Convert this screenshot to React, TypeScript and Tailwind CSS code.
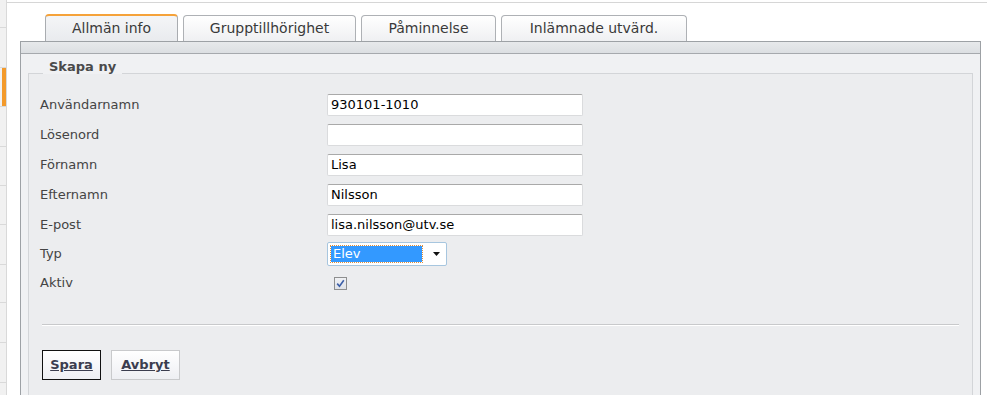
import React from "react";

const font = { fontFamily: '"DejaVu Sans", Verdana, sans-serif' };

function Tab({ label, active, width }: { label: string; active?: boolean; width: string }) {
  return (
    <div
      className={
        "flex items-center justify-center rounded-t-[4px] border border-b-0 text-[14px] text-[#3a3a3a] " +
        width +
        (active
          ? " h-[27px] border-[#a9acb0] border-t-2 border-t-[#f5a23a] bg-gradient-to-b from-[#f4f5f7] to-[#e9ebee]"
          : " h-[26px] border-[#aeb1b5] bg-gradient-to-b from-[#ffffff] to-[#eff0f2]")
      }
    >
      {label}
    </div>
  );
}

function Row({ label, children, h }: { label: string; children?: React.ReactNode; h: string }) {
  return (
    <div className={"flex items-center " + h}>
      <div className="w-[287px] text-[13px] text-[#444]">{label}</div>
      {children}
    </div>
  );
}

function TextInput({ value }: { value: string }) {
  return (
    <div className="flex h-[22px] w-[256px] items-center rounded-[2px] border border-[#dadbdd] border-t-[#a9a9a9] bg-white pl-[3px] text-[13px] text-black">
      {value}
    </div>
  );
}

export default function App() {
  const stripItems = [28, 40, 39, 40, 39, 39, 40, 38, 40, 40, 40];
  return (
    <div className="flex h-[395px] w-[987px] overflow-hidden bg-white" style={font}>
      <div className="flex w-[7px] flex-col border-r border-[#d9d9d9] bg-[#f1f1f1]">
        {stripItems.map((h, i) => (
          <div
            key={i}
            className="box-border shrink-0 border-b border-[#d9d9d9]"
            style={{ height: h }}
          >
            {i === 2 && <div className="ml-[2px] h-full bg-[#f39a2b]" />}
          </div>
        ))}
      </div>
      <div className="flex flex-1 flex-col">
        <div className="mt-[2px] border-t border-[#d6d6d6]" />
        <div className="ml-[13px] flex w-[961px] flex-col">
          <div className="flex items-end gap-[5px] pl-[25px] pt-[11px]">
            <Tab label="Allmän info" active width="w-[133px]" />
            <Tab label="Grupptillhörighet" width="w-[173px]" />
            <Tab label="Påminnelse" width="w-[135px]" />
            <Tab label="Inlämnade utvärd." width="w-[186px]" />
          </div>
          <div className="flex h-[360px] flex-col border border-b-0 border-[#9da1a5] bg-[#f0f1f3]">
            <div className="h-[12px] border-b border-[#a6a9ad] bg-gradient-to-b from-[#e7e9eb] to-[#dcdfe2]" />
            <div className="relative mx-[7px] mt-[19px] flex-1 border border-b-0 border-[#d3d5d8] bg-[#ecedef]">
              <span className="absolute left-[14px] top-[-1px] h-[1px] w-[79px] bg-[#f0f1f3]" />
              <span className="absolute left-[14px] top-[-15px] px-[6px] text-[13px] font-bold leading-[16px] text-[#4a4a4a]">
                Skapa ny
              </span>
              <div className="flex flex-col pl-[11px] pt-[16px]">
                <Row label="Användarnamn" h="h-[30px]">
                  <TextInput value="930101-1010" />
                </Row>
                <Row label="Lösenord" h="h-[30px]">
                  <TextInput value="" />
                </Row>
                <Row label="Förnamn" h="h-[30px]">
                  <TextInput value="Lisa" />
                </Row>
                <Row label="Efternamn" h="h-[30px]">
                  <TextInput value="Nilsson" />
                </Row>
                <Row label="E-post" h="h-[30px]">
                  <TextInput value="lisa.nilsson@utv.se" />
                </Row>
                <Row label="Typ" h="h-[28px]">
                  <div className="flex h-[24px] w-[120px] items-center rounded-[2px] border border-[#a7c6df] bg-white pl-[3px]">
                    <div className="flex h-[16px] w-[91px] items-center bg-[#3399ff] pl-[2px] text-[13px] text-white outline outline-1 outline-dotted outline-[#e0903a]">
                      Elev
                    </div>
                    <svg className="ml-[11px]" width="7" height="4" viewBox="0 0 7 4">
                      <path d="M0 0H7L3.5 4Z" fill="#111" />
                    </svg>
                  </div>
                </Row>
                <Row label="Aktiv" h="h-[30px]">
                  <div className="ml-[7px] flex h-[13px] w-[13px] items-center justify-center border border-[#8e8f8f] bg-gradient-to-b from-[#f0f1f4] to-[#dfe2e8]">
                    <svg width="9" height="9" viewBox="0 0 9 9">
                      <path d="M1.2 4.6 L3.5 7.2 L7.8 1.2" stroke="#3c5fa8" strokeWidth="1.6" fill="none" />
                    </svg>
                  </div>
                </Row>
              </div>
              <div className="mx-[13px] mt-[26px] border-t border-b border-t-[#c8c9cb] border-b-white" />
              <div className="ml-[13px] mt-[24px] flex gap-[10px]">
                <button className="h-[30px] w-[59px] border border-[#111] bg-gradient-to-b from-[#ffffff] to-[#eeeff3] text-[13px] font-bold text-[#3b3d4f] underline">
                  Spara
                </button>
                <button className="h-[30px] w-[69px] border border-[#c9cacc] bg-gradient-to-b from-[#ffffff] to-[#eeeff3] text-[13px] font-bold text-[#3b3d4f] underline">
                  Avbryt
                </button>
              </div>
            </div>
          </div>
        </div>
      </div>
    </div>
  );
}
